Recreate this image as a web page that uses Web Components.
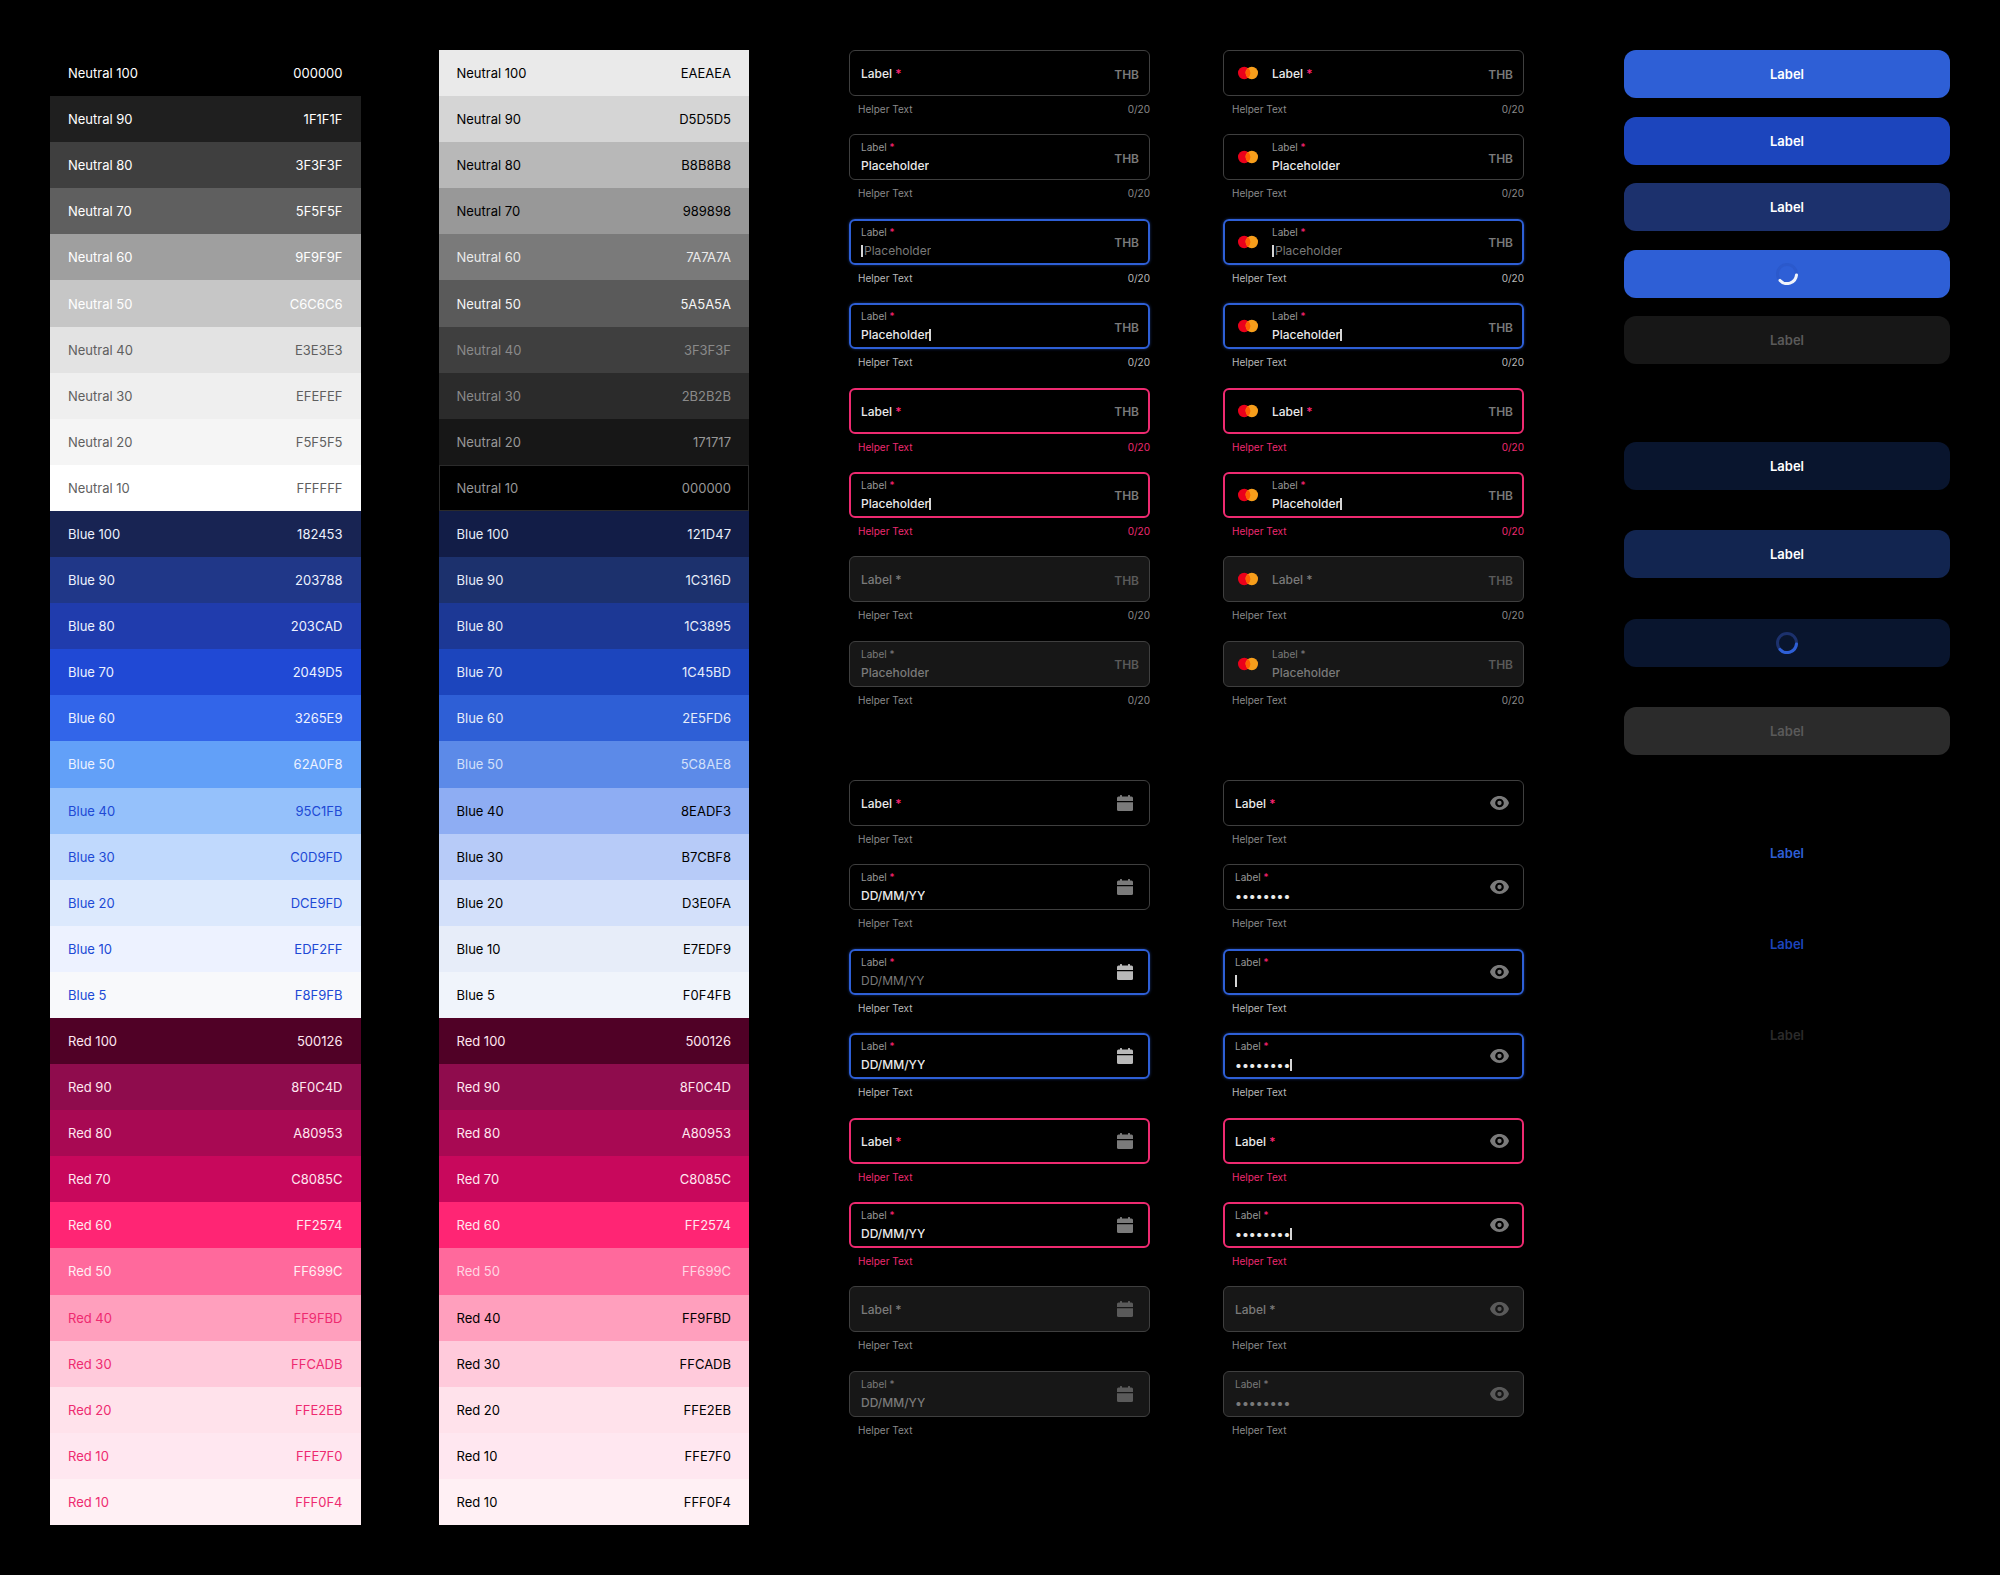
<!DOCTYPE html>
<html lang="en">
<head>
<meta charset="utf-8">
<title>Dark theme tokens and components</title>
<style>
  html { background: #000; }
  body { margin: 0; font-family: Inter, "Liberation Sans", sans-serif; }
</style>
</head>
<body>
<style-sheet></style-sheet>
<script>
const define = (name, setup) => customElements.define(name, class extends HTMLElement {
  connectedCallback() {
    if (this.shadowRoot) return;
    this.attachShadow({ mode: 'open' }).innerHTML = setup(this);
  }
});

const WHITE = '#ffffff';
const NEUTRAL_LIGHT = [
  ['100', '000000', WHITE], ['90', '1F1F1F', WHITE], ['80', '3F3F3F', WHITE], ['70', '5F5F5F', WHITE],
  ['60', '9F9F9F', WHITE], ['50', 'C6C6C6', WHITE], ['40', 'E3E3E3', '#5f5f5f'],
  ['30', 'EFEFEF', '#5f5f5f'], ['20', 'F5F5F5', '#5f5f5f'], ['10', 'FFFFFF', '#5f5f5f']];
const NEUTRAL_DARK = [
  ['100', 'EAEAEA', '#000'], ['90', 'D5D5D5', '#000'], ['80', 'B8B8B8', '#000'], ['70', '989898', '#000'],
  ['60', '7A7A7A', '#eaeaea'], ['50', '5A5A5A', '#f5f5f5'], ['40', '3F3F3F', '#8a8a8a'],
  ['30', '2B2B2B', '#8a8a8a'], ['20', '171717', '#989898'], ['10', '000000', '#989898', '#2b2b2b']];
const BLUE_LIGHT = [
  ['100', '182453', '#edf2ff'], ['90', '203788', '#edf2ff'], ['80', '203CAD', '#edf2ff'],
  ['70', '2049D5', '#edf2ff'], ['60', '3265E9', '#edf2ff'], ['50', '62A0F8', '#edf2ff'],
  ['40', '95C1FB', '#2049d5'], ['30', 'C0D9FD', '#2049d5'], ['20', 'DCE9FD', '#2049d5'],
  ['10', 'EDF2FF', '#2049d5'], ['5', 'F8F9FB', '#2049d5']];
const BLUE_DARK = [
  ['100', '121D47', '#e7edf9'], ['90', '1C316D', '#e7edf9'], ['80', '1C3895', '#e7edf9'],
  ['70', '1C45BD', '#e7edf9'], ['60', '2E5FD6', '#e7edf9'], ['50', '5C8AE8', '#d3e0fa'],
  ['40', '8EADF3', '#000'], ['30', 'B7CBF8', '#000'], ['20', 'D3E0FA', '#000'],
  ['10', 'E7EDF9', '#000'], ['5', 'F0F4FB', '#000']];
const RED = ['500126', '8F0C4D', 'A80953', 'C8085C', 'FF2574', 'FF699C', 'FF9FBD', 'FFCADB', 'FFE2EB', 'FFE7F0', 'FFF0F4'];
const RED_STEPS = ['100', '90', '80', '70', '60', '50', '40', '30', '20', '10', '10'];
const reds = (mid, low) => RED.map((hex, i) => [RED_STEPS[i], hex, i < 5 ? '#ffe7f0' : i === 5 ? mid : low]);

const rows = (family, list) => list.map(([step, hex, ink, line]) =>
  `<color-swatch name="${family} ${step}" hex="${hex}" style="--fill:#${hex};--ink:${ink};--line:${line || 'transparent'}"></color-swatch>`).join('');

define('color-swatch', el => `
  <style>
    :host { display: flex; flex: 1 0 auto; box-sizing: border-box; min-height: 40px; align-items: center;
      justify-content: space-between; padding: 0 17px; border: 1px solid var(--line);
      background: var(--fill) border-box; color: var(--ink); font-size: 13px; line-height: 20px; font-weight: 400; }
  </style>
  <span>${el.getAttribute('name')}</span><span>${el.getAttribute('hex')}</span>`);

define('color-palette', el => {
  const light = el.getAttribute('mode') === 'light';
  return `
  <style>:host { display: flex; flex-direction: column; flex: 1; }</style>
  ${rows('Neutral', light ? NEUTRAL_LIGHT : NEUTRAL_DARK)}
  ${rows('Blue', light ? BLUE_LIGHT : BLUE_DARK)}
  ${rows('Red', light ? reds('#fff0f4', '#ee2a70') : reds('#ffd6e3', '#000'))}`;
});

const ICONS = {
  card: `<svg width="20" height="14" viewBox="0 0 20 14" aria-hidden="true">
    <circle cx="6.2" cy="7" r="6.2" fill="#eb001b"/><circle cx="13.8" cy="7" r="6.2" fill="#f79e1b"/>
    <path d="M10 2.1a6.2 6.2 0 0 1 0 9.8a6.2 6.2 0 0 1 0-9.800z" fill="#ff5f00"/></svg>`,
  calendar: `<svg width="16" height="16" viewBox="0 0 16 16" fill="currentColor" aria-hidden="true">
    <path d="M3 .6a.6.6 0 0 1 .6-.6h.8a.6.6 0 0 1 .6.6V1.500h6V.6a.6.6 0 0 1 .6-.6h.8a.6.6 0 0 1 .6.6V1.500h1.500a1.500 1.500 0 0 1 1.500 1.500v3H0V3a1.500 1.500 0 0 1 1.500-1.500h1.500z"/>
    <path d="M0 7.200h16V14.500a1.500 1.500 0 0 1-1.500 1.500h-13a1.500 1.500 0 0 1-1.500-1.500z"/></svg>`,
  eye: `<svg width="19" height="14" viewBox="1 4 22 16" fill="currentColor" aria-hidden="true">
    <path d="M12 4C7 4 2.700 7 1 12c1.700 5 6 8 11 8s9.300-3 11-8c-1.700-5-6-8-11-8zm0 13a5 5 0 1 1 0-10 5 5 0 0 1 0 10zm0-7.500a2.500 2.500 0 1 0 0 5 2.500 2.500 0 0 0 0-5z"/></svg>`
};

let serial = 0;
define('text-field', el => {
  const state = el.getAttribute('state');
  const kind = el.getAttribute('kind');
  const id = 'field-' + (++serial);
  const filled = !['rest', 'error', 'disabled'].includes(state);
  const off = state.startsWith('disabled') ? 'disabled' : '';
  const text = { date: 'DD/MM/YY', password: 'password' }[kind] || 'Placeholder';
  const empty = state === 'focus';
  const caret = kind !== 'date' && ['focus', 'focus-filled', 'error-filled'].includes(state) ? '<i class="caret"></i>' : '';
  const type = kind === 'password' ? 'password' : 'text';
  const hint = empty && kind !== 'password' ? `placeholder="${text}"` : '';
  const value = filled && !empty ? `value="${text}"` : '';
  const input = `<input id="${id}" type="${type}" ${hint} ${value} ${off} autocomplete="off">`;
  const money = kind === 'money' || kind === 'card';
  const tone = state.startsWith('focus') ? 'focus' : state.startsWith('error') ? 'error' : off || 'rest';
  return `
  <style>
    :host { display: block; }
    .box { --bw: 1px; display: flex; align-items: center; box-sizing: border-box; height: 46px;
      padding: 0 calc(11px - var(--bw)) 0 calc(12px - var(--bw)); border: var(--bw) solid #3f3f3f; border-radius: 6px; }
    .focus .box { --bw: 2px; border-color: #2e5fd6; box-shadow: 0 0 3px rgba(46, 95, 214, .5); }
    .error .box { --bw: 2px; border-color: #ee2a70; }
    .disabled .box { background: #171717; }
    .lead { display: flex; padding: 0 14px 0 3px; }
    .body { flex: 1; min-width: 0; padding-top: 2px; }
    .body.plain { display: grid; }
    .plain > * { grid-area: 1 / 1; }
    label { display: block; margin-bottom: 2px; color: #989898; font-size: 10px; line-height: 14px; }
    .plain label { margin: 0; color: #eaeaea; font-size: 12px; line-height: 20px; font-weight: 500; }
    label b { color: #ff2574; font-weight: inherit; }
    .line { display: flex; align-items: center; height: 20px; }
    input { box-sizing: border-box; min-width: 0; height: 20px; margin: 0; padding: 0; border: 0; outline: 0;
      background: none; color: #eaeaea; font: 500 12px/20px Inter, "Liberation Sans", sans-serif; }
    input[type=password] { font-size: 13px; }
    .line input { field-sizing: content; }
    .plain input { width: 100%; }
    input::placeholder { color: #7a7a7a; font-weight: 400; opacity: 1; }
    .caret { flex: none; width: 2px; height: 12px; margin-right: 1px; background: #d5d5d5; }
    .unit { padding-top: 3px; color: #7a7a7a; font-size: 12px; line-height: 20px; font-weight: 600; }
    .icon { display: flex; justify-content: center; width: 28px; color: #7a7a7a; }
    .focus .icon.calendar { color: #b8b8b8; }
    .disabled label, .disabled label b, .disabled input { color: #7a7a7a; }
    .disabled .unit, .disabled .icon { color: #5a5a5a; }
    .help { display: flex; justify-content: space-between; padding: 5px 0 0 9px; color: #8a8a8a;
      font-size: 10px; line-height: 16px; }
    .focus .help { color: #b8b8b8; }
    .error .help { color: #ee2a70; }
  </style>
  <div class="${tone}">
    <div class="box">
      ${kind === 'card' ? `<span class="lead">${ICONS.card}</span>` : ''}
      <div class="body ${filled ? '' : 'plain'}">
        <label for="${id}">Label <b>*</b></label>
        ${filled ? `<div class="line">${empty ? caret + input : input + caret}</div>` : input}
      </div>
      ${money ? '<span class="unit">THB</span>'
        : kind === 'date' ? `<span class="icon calendar">${ICONS.calendar}</span>`
        : `<span class="icon">${ICONS.eye}</span>`}
    </div>
    <div class="help"><span>Helper Text</span>${money ? '<span>0/20</span>' : ''}</div>
  </div>`;
});

define('field-set', el => `
  <style>
    :host { display: grid; flex: 1; grid-template-rows: repeat(8, 1fr); min-height: 675px; }
  </style>
  ${['rest', 'filled', 'focus', 'focus-filled', 'error', 'error-filled', 'disabled', 'disabled-filled']
    .map(state => `<text-field kind="${el.getAttribute('kind')}" state="${state}"></text-field>`).join('')}`);

define('action-button', el => `
  <style>
    :host { display: block; }
    button { display: flex; align-items: center; justify-content: center; width: 100%; height: 48px; padding: 0;
      border: 0; border-radius: 12px; background: var(--fill, none); color: var(--ink, #fff);
      font: 600 13px/20px Inter, "Liberation Sans", sans-serif; }
    svg { display: block; }
  </style>
  <button type="button" ${el.hasAttribute('off') ? 'disabled' : ''} ${el.hasAttribute('busy') ? 'aria-label="Loading"' : ''}>
    ${el.hasAttribute('busy') ? `<svg width="22" height="22" viewBox="0 0 22 22" fill="none" stroke-width="3" aria-hidden="true">
      <circle cx="11" cy="11" r="9.500" stroke="var(--track)"/>
      <path d="M20.500 12A9.500 9.500 0 0 1 4 17.400" stroke="var(--arc)" stroke-linecap="round"/></svg>` : '<slot></slot>'}
  </button>`);

define('style-sheet', () => `
  <style>
    :host { display: grid; grid-template-columns: 699fr 675fr 326fr; column-gap: 100px; box-sizing: border-box;
      min-height: 100vh; padding: 50px; background: #000; }
    .pair { display: flex; }
    .palettes { gap: 78px; }
    .fields { flex-direction: column; gap: 55px; }
    .fields .pair { gap: 73px; }
    .fields, .buttons, .group { display: flex; flex-direction: column; }
    .group { justify-content: space-between; }
    .primary { min-height: 314px; }
    .secondary { min-height: 313px; margin-top: 78px; }
    .text { gap: 43px; margin-top: 74px; }
  </style>
  <section class="pair palettes">
    <color-palette mode="light"></color-palette><color-palette mode="dark"></color-palette>
  </section>
  <section class="fields">
    <div class="pair"><field-set kind="money"></field-set><field-set kind="card"></field-set></div>
    <div class="pair"><field-set kind="date"></field-set><field-set kind="password"></field-set></div>
  </section>
  <section class="buttons">
    <div class="group primary">
      <action-button style="--fill:#2e5fd6">Label</action-button>
      <action-button style="--fill:#1c45bd">Label</action-button>
      <action-button style="--fill:#1c316d">Label</action-button>
      <action-button busy style="--fill:#2e5fd6;--track:#2b59cc;--arc:#f0f4fb"></action-button>
      <action-button off style="--fill:#171717;--ink:#5a5a5a">Label</action-button>
    </div>
    <div class="group secondary">
      <action-button style="--fill:#09152e">Label</action-button>
      <action-button style="--fill:#122550">Label</action-button>
      <action-button busy style="--fill:#09152e;--track:#1c316d;--arc:#2e5fd6"></action-button>
      <action-button off style="--fill:#2b2b2b;--ink:#5a5a5a">Label</action-button>
    </div>
    <div class="group text">
      <action-button style="--ink:#2e5fd6">Label</action-button>
      <action-button style="--ink:#1c45bd">Label</action-button>
      <action-button off style="--ink:#2b2b2b">Label</action-button>
    </div>
  </section>`);
</script>
</body>
</html>
